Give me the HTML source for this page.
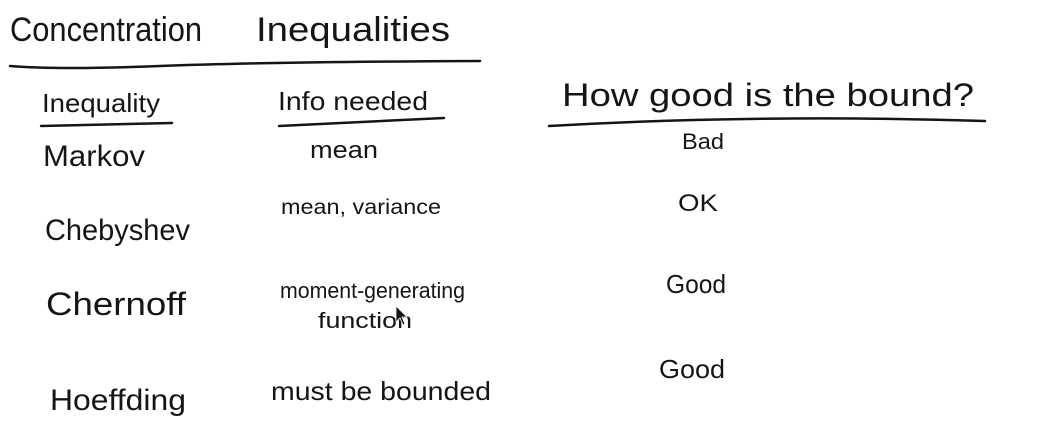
<!DOCTYPE html>
<html><head><style>
html,body{margin:0;padding:0;background:#fff;width:1056px;height:435px;overflow:hidden}
svg text{font-family:"Liberation Sans",sans-serif;fill:#151515}
</style></head><body>
<svg width="1056" height="435" viewBox="0 0 1056 435" xmlns="http://www.w3.org/2000/svg">
<text x="10" y="41" font-size="34" textLength="192" lengthAdjust="spacingAndGlyphs">Concentration</text>
<text x="256" y="41" font-size="34" textLength="194" lengthAdjust="spacingAndGlyphs">Inequalities</text>
<text x="42" y="112" font-size="26" textLength="118" lengthAdjust="spacingAndGlyphs">Inequality</text>
<text x="278" y="110" font-size="26" textLength="150" lengthAdjust="spacingAndGlyphs">Info needed</text>
<text x="562" y="106" font-size="32" textLength="412" lengthAdjust="spacingAndGlyphs">How good is the bound?</text>
<text x="43" y="166" font-size="30" textLength="102" lengthAdjust="spacingAndGlyphs">Markov</text>
<text x="310" y="158" font-size="24" textLength="68" lengthAdjust="spacingAndGlyphs">mean</text>
<text x="682" y="149" font-size="22" textLength="42" lengthAdjust="spacingAndGlyphs">Bad</text>
<text x="45" y="240" font-size="30" textLength="145" lengthAdjust="spacingAndGlyphs">Chebyshev</text>
<text x="281" y="214" font-size="21" textLength="160" lengthAdjust="spacingAndGlyphs">mean, variance</text>
<text x="678" y="211" font-size="24" textLength="40" lengthAdjust="spacingAndGlyphs">OK</text>
<text x="46" y="315" font-size="32" textLength="140" lengthAdjust="spacingAndGlyphs">Chernoff</text>
<text x="280" y="298" font-size="22" textLength="185" lengthAdjust="spacingAndGlyphs">moment-generating</text>
<text x="318" y="328" font-size="22" textLength="94" lengthAdjust="spacingAndGlyphs">function</text>
<text x="666" y="293" font-size="26" textLength="60" lengthAdjust="spacingAndGlyphs">Good</text>
<text x="50" y="410" font-size="30" textLength="136" lengthAdjust="spacingAndGlyphs">Hoeffding</text>
<text x="271" y="400" font-size="26" textLength="220" lengthAdjust="spacingAndGlyphs">must be bounded</text>
<text x="659" y="378" font-size="26" textLength="66" lengthAdjust="spacingAndGlyphs">Good</text>
<g fill="none" stroke="#151515" stroke-width="2.5" stroke-linecap="round">
<path d="M10 66 Q 60 70 160 66 T 480 61"/>
<path d="M41 126 L172 123"/>
<path d="M279 126 Q 360 122 444 118"/>
<path d="M549 126 Q 760 114 985 121"/>
</g>
<path d="M396 306 L396 322 L400 318 L403 325 L405 324 L402 317 L407 317 Z" fill="#111" stroke="#fff" stroke-width="0.8"/>
</svg>
</body></html>
